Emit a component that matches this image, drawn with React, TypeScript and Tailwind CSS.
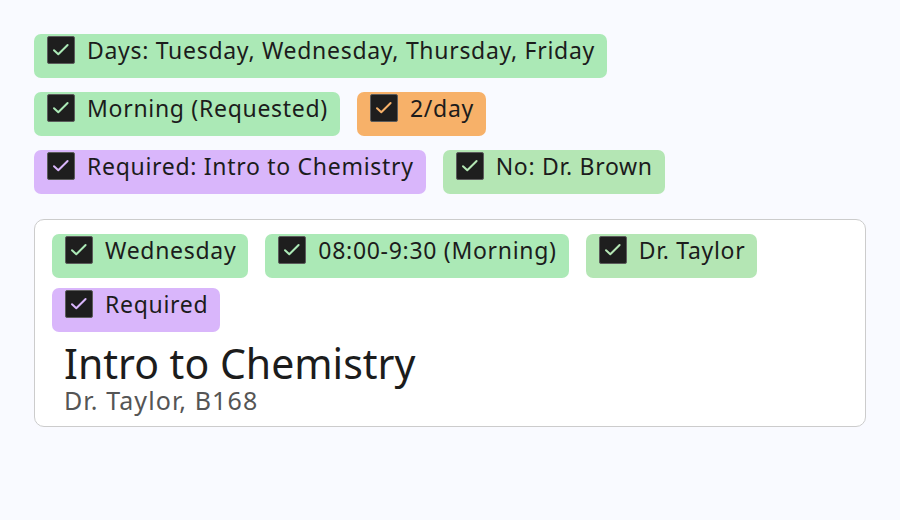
import React from 'react'

type Tone = 'green' | 'mint' | 'orange' | 'purple'

const toneBg: Record<Tone, string> = {
  green: 'bg-[#abe9b6]',
  mint: 'bg-[#b4e6b4]',
  orange: 'bg-[#f7b169]',
  purple: 'bg-[#d9b6fb]',
}

const toneStroke: Record<Tone, string> = {
  green: '#abe9b6',
  mint: '#b4e6b4',
  orange: '#f7b169',
  purple: '#d9b6fb',
}

function Check({ tone }: { tone: Tone }) {
  return (
    <span className="flex h-[28px] w-[28px] shrink-0 items-center justify-center rounded-[2px] border border-[#5c5c5c] bg-[#1e1e1e]">
      <svg viewBox="0 0 24 24" className="h-[24px] w-[24px]" fill="none">
        <path
          d="M5 12.2l4.3 4.1L18.6 7"
          stroke={toneStroke[tone]}
          strokeWidth="2"
          strokeLinecap="round"
          strokeLinejoin="round"
        />
      </svg>
    </span>
  )
}

function Tag({ tone, label }: { tone: Tone; label: string }) {
  return (
    <div
      className={`flex h-[44px] items-start gap-[12px] rounded-[7px] pl-[13px] pr-[12px] pt-[2px] ${toneBg[tone]}`}
    >
      <Check tone={tone} />
      <span className="text-[23px] leading-[28px] tracking-[0.7px] text-[#1c1c1c]">{label}</span>
    </div>
  )
}

export default function App() {
  return (
    <div
      className="h-[520px] w-[900px] bg-[#f9faff] px-[34px] pt-[34px]"
      style={{ fontFamily: '"Noto Sans", "Open Sans", sans-serif' }}
    >
      <div className="flex flex-col gap-[14px]">
        <div className="flex">
          <Tag tone="green" label="Days: Tuesday, Wednesday, Thursday, Friday" />
        </div>
        <div className="flex gap-[17px]">
          <Tag tone="green" label="Morning (Requested)" />
          <Tag tone="orange" label="2/day" />
        </div>
        <div className="flex gap-[17px]">
          <Tag tone="purple" label="Required: Intro to Chemistry" />
          <Tag tone="mint" label="No: Dr. Brown" />
        </div>
      </div>

      {/* Class card */}
      <div className="mt-[25px] w-[832px] rounded-[10px] border border-[#cccccc] bg-white px-[17px] pb-[12px] pt-[14px]">
        <div className="flex flex-wrap gap-x-[17px] gap-y-[10px]">
          <Tag tone="green" label="Wednesday" />
          <Tag tone="green" label="08:00-9:30 (Morning)" />
          <Tag tone="mint" label="Dr. Taylor" />
          <Tag tone="purple" label="Required" />
        </div>
        <div className="mt-[8px] px-[12px]">
          <div className="text-[41px] leading-[46px] text-[#1c1c1c]">Intro to Chemistry</div>
          <div className="text-[25px] leading-[28px] tracking-[1.1px] text-[#555555]">Dr. Taylor, B168</div>
        </div>
      </div>
    </div>
  )
}
